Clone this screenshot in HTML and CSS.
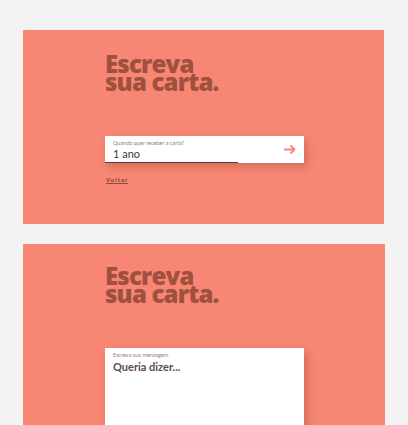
FILE: index.html
```html
<!DOCTYPE html>
<html lang="pt">
<head>
<meta charset="utf-8">
<title>Escreva sua carta</title>
<link rel="stylesheet" href="styles.css">
</head>
<body>
<main class="page">
  <section class="panel">
    <h1 class="title">Escreva<br>sua carta.</h1>
    <div class="card card-input">
      <div class="field">
        <label class="label">Quando quer receber a carta?</label>
        <div class="value">1 ano</div>
      </div>
      <svg class="arrow" width="12" height="9" viewBox="0 0 12 9" aria-hidden="true">
        <path d="M0.5 4.5H10.5M7 1L10.5 4.5L7 8" fill="none" stroke="#f78774" stroke-width="1.8" stroke-linecap="round" stroke-linejoin="round"/>
      </svg>
    </div>
    <a class="back" href="#">Voltar</a>
  </section>
  <section class="panel panel-2">
    <h1 class="title">Escreva<br>sua carta.</h1>
    <div class="card card-message">
      <label class="label">Escreva sua mensagem</label>
      <div class="value value-msg">Queria dizer...</div>
    </div>
  </section>
</main>
</body>
</html>
```
FILE: styles.css
```css
html, body {
  margin: 0;
  padding: 0;
  background: #f2f2f2;
  font-family: "Lato", "Open Sans", sans-serif;
  overflow: hidden;
}
.page {
  padding: 30px 0 0 23px;
  display: flex;
  flex-direction: column;
  gap: 20px;
  width: 362px;
}
.panel {
  background: #f78774;
  width: 361px;
  height: 194px;
  box-sizing: border-box;
  padding: 25px 0 0 82px;
  display: flex;
  flex-direction: column;
  align-items: flex-start;
}
.panel-2 {
  width: 362px;
  height: 260px;
  padding-top: 23px;
}
.title {
  margin: 0;
  font-family: "Open Sans", "Lato", sans-serif;
  font-size: 24px;
  line-height: 18px;
  font-weight: 800;
  letter-spacing: -0.8px;
  color: #a0503f;
}
.card {
  background: #fff;
  width: 199px;
  box-sizing: border-box;
  box-shadow: 3px 4px 8px rgba(120, 40, 30, 0.28);
}
.card-input {
  margin-top: 45px;
  height: 27px;
  display: flex;
  align-items: center;
  justify-content: space-between;
  padding: 0 8px 0 0;
}
.field {
  width: 133px;
  height: 27px;
  box-sizing: border-box;
  padding: 4px 0 0 8px;
  border-bottom: 1.5px solid #5c3b37;
}
.label {
  display: block;
  font-size: 5.5px;
  line-height: 7px;
  color: #8a8282;
}
.value {
  font-size: 11px;
  line-height: 13px;
  color: #3f3838;
  font-weight: 400;
}
.arrow {
  display: block;
}
.back {
  margin-top: 13px;
  margin-left: 1px;
  font-size: 6px;
  font-weight: 900;
  letter-spacing: 1px;
  color: #8a4a40;
  text-decoration: underline;
}
.card-message {
  margin-top: 45px;
  height: 120px;
  padding: 4px 8px;
}
.value-msg {
  font-weight: 700;
  color: #5b4b4b;
  margin-top: 1px;
}
```
